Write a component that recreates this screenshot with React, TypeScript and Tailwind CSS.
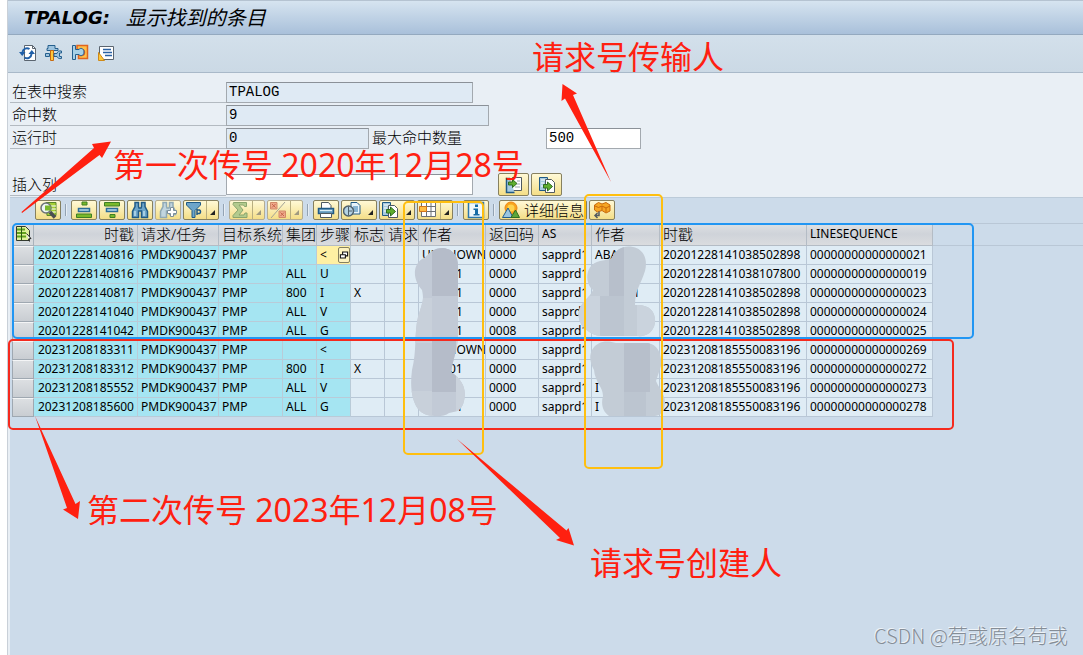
import type { ReactNode } from "react";

type IconName =
  | "refresh" | "tools" | "puzzle" | "note"
  | "detail" | "sortAsc" | "sortDesc" | "find" | "findNext" | "filter"
  | "sum" | "percent" | "print" | "views" | "export" | "layout" | "info"
  | "insert" | "append" | "picture" | "brick" | "selectAll" | "copy";

const icons: Record<IconName, ReactNode> = {
  refresh: (
    <>
      <path d="M5.5 1.5h8l3 3v12h-11z" fill="#fff" stroke="#5b6570" />
      <path d="M13.5 1.5v3h3" fill="none" stroke="#5b6570" />
      <path d="M3.500 8a4.500 4.500 0 0 1 7-3M12.500 10a4.500 4.500 0 0 1-7 3.500" fill="none" stroke="#1f5fa8" strokeWidth="2" />
      <path d="M0 8h6.500L3.200 12zM9.500 10h6.500l-3.200-4z" fill="#1f5fa8" />
    </>
  ),
  tools: (
    <>
      <path d="M3 1.500h7v3h3v2H2v-2h1z" fill="#9dc3de" stroke="#255f8d" />
      <path d="M5.500 6.500h3v10h-3z" fill="#ffc83a" stroke="#c76a12" />
      <path d="M.5 9.500h4v3h-4zM9 9.500h3c.5-2 2-3 4.500-2.500v2h-2v3.500h2v2c-2.500.5-4-.5-4.500-2H9z" fill="#9dc3de" stroke="#255f8d" />
    </>
  ),
  puzzle: (
    <>
      <path d="M6 1.500h10.500v13H7.500v-3h3a3 3 0 0 0 0-6H6z" fill="#ffc04a" stroke="#e0641f" strokeWidth="1.500" />
      <path d="M1.500 1.500h3v4h3.500c1-2 5-1.500 5 2.500s-4 4.500-5 2.500H4.500v5h-3z" fill="#a8d0e6" stroke="#255f8d" />
    </>
  ),
  note: (
    <>
      <path d="M2.500 2.500h14v13h-14z" fill="#fff" stroke="#5b6570" />
      <path d="M6 5.500h8M6 8.500h9M8 11.500h7" stroke="#2b62a4" strokeWidth="1.500" />
      <path d="M1.500 8.500l6 8h-6z" fill="#ffc83a" stroke="#cf8a18" />
    </>
  ),
  detail: (
    <>
      <path d="M7 1.500h10v13H8z" fill="#a6cf36" stroke="#59852a" />
      <path d="M9 5h8M9 8h8M9 11h8" stroke="#fff" strokeWidth="1" />
      <circle cx="7" cy="7" r="5" fill="#eef6f4" stroke="#6b7378" strokeWidth="1.500" />
      <path d="M6 4.500h5.500v5H6z" fill="#79b82d" />
      <path d="M11 11l5 5.500" stroke="#4a4f53" strokeWidth="3.500" />
    </>
  ),
  sortAsc: (
    <>
      <path d="M7 1h5v3H7zM1.500 13h15v3.500h-15z" fill="#7ab929" stroke="#3e7f25" />
      <path d="M3.500 7.500h11v3h-11z" fill="#b9dced" stroke="#2b6c98" strokeWidth="1.500" />
    </>
  ),
  sortDesc: (
    <>
      <path d="M1.500 1.500h15v3.500h-15zM7 13.500h5v3h-5z" fill="#7ab929" stroke="#3e7f25" />
      <path d="M3.500 7.500h11v3h-11z" fill="#b9dced" stroke="#2b6c98" strokeWidth="1.500" />
    </>
  ),
  find: (
    <>
      <path d="M4 1.500h3.500v4L8 7h2l.5-1.500v-4H14v4l2.500 5v6h-6V10h-3v6.500h-6v-6l2.500-5z" fill="#6da5ca" stroke="#205a86" strokeWidth="1.500" />
      <path d="M4 10v5M13 10v5" stroke="#b9dced" strokeWidth="1.500" />
    </>
  ),
  findNext: (
    <>
      <path d="M4 1.500h3.500v4L8 7h2l.5-1.500v-4H14v4l2.500 5v3h-6V10h-3v6.500h-6v-6l2.500-5z" fill="#c1d5df" stroke="#8fa9b5" strokeWidth="1.500" />
      <path d="M11.500 6.500h3v3h3v3h-3v3h-3v-3h-3v-3h3z" fill="#fff" stroke="#7c8f9b" />
    </>
  ),
  filter: (
    <>
      <path d="M1.500 1.500h14v2.500L10 9.500v7H7v-7L1.500 4z" fill="#6da5ca" stroke="#205a86" />
      <path d="M12 8v6M12 9h2.500a2 2 0 0 1 0 3.500H12" fill="none" stroke="#205a86" strokeWidth="1.500" />
    </>
  ),
  sum: <path d="M2.500 1.500h13v4h-2l-1-1.500H8l4 5-4 5h5l1-2h2v4.500h-14v-2l5-5.500-5-5.500z" fill="#b3cb8e" stroke="#8aa56d" />,
  percent: (
    <>
      <path d="M1.500 1.500h6.500v6.500H1.500zM10 10h6.500v6.500H10z" fill="#f0a98a" stroke="#d28a68" />
      <path d="M3 3l3.500 3.500M6.500 3L3 6.500M11.500 11.500L15 15M15 11.500L11.500 15" stroke="#c5654b" />
      <path d="M16 1L2 17" stroke="#a3a397" />
    </>
  ),
  print: (
    <>
      <path d="M4.500 7V1.500h7l2.500 3V7" fill="#fff" stroke="#4f5960" />
      <path d="M1.500 7.500h15v5h-15z" fill="#76a8c9" stroke="#205a86" strokeWidth="1.500" />
      <path d="M3.500 12.500h11v4h-11z" fill="#fff" stroke="#4f5960" />
      <path d="M3 9.500h12" stroke="#d9edf6" />
    </>
  ),
  views: (
    <>
      <path d="M8 1.500h6l3 3V13H8z" fill="#e8f4fa" stroke="#205a86" />
      <path d="M10 6h5M10 8h5M10 10h5" stroke="#2b77ad" />
      <circle cx="5.500" cy="10" r="5" fill="#b4d3e5" stroke="#50616c" strokeWidth="1.500" />
      <path d="M5.500 5.500v9M5.500 10h3.500" stroke="#50616c" />
    </>
  ),
  export: (
    <>
      <path d="M1.500 1.500h8v13h-8z" fill="#a7cbe0" stroke="#205a86" />
      <path d="M3 4h5M3 7h3M3 10h3" stroke="#fff" />
      <path d="M7.500 4.500h6l3 3v9h-9z" fill="#fff" stroke="#4f5960" />
      <path d="M5.500 8.500h4V6l5 4.500-5 4.500v-3h-4z" fill="#5fae2e" stroke="#2f6d1f" />
    </>
  ),
  append: (
    <>
      <path d="M1.500 1.500h8v13h-8z" fill="#a7cbe0" stroke="#205a86" />
      <path d="M3 4h5M3 7h3M3 10h3" stroke="#fff" />
      <path d="M7.500 3.500h6l3 3v10h-9z" fill="#fff" stroke="#4f5960" />
      <path d="M5.500 8.500h4V6l5 4.500-5 4.500v-3h-4z" fill="#5fae2e" stroke="#2f6d1f" />
    </>
  ),
  insert: (
    <>
      <path d="M7.500 1.500h9v13h-9z" fill="#fff" stroke="#4f5960" />
      <path d="M12 5h3M12 8h3M10 11h5" stroke="#9aa6ae" />
      <path d="M5 2.500H1.500v14h8" fill="#a7cbe0" stroke="#205a86" strokeWidth="1.500" />
      <path d="M3.500 6h4V3.500l4.500 4-4.500 4V9h-4z" fill="#5fae2e" stroke="#2f6d1f" />
    </>
  ),
  layout: (
    <>
      <path d="M2.500 1.500h14v14h-14z" fill="#fff" stroke="#6c7175" />
      <path d="M2.500 5.500h14M2.500 10.500h14M7.500 1.500v14M12 1.500v14" stroke="#6c7175" />
      <path d="M.5 5.500h7v5h-7z" fill="#ffbd45" stroke="#d4761c" />
    </>
  ),
  info: (
    <>
      <path d="M1.500 1.500h15v15h-15z" fill="#eff8fc" stroke="#2b77ad" strokeWidth="1.500" />
      <path d="M8 3.500h3V6H8zM6.500 7.500H11V13h1.500v1.500h-6V13H8V9H6.500z" fill="#166ca6" />
    </>
  ),
  picture: (
    <>
      <circle cx="9" cy="7" r="6" fill="#f8a51c" stroke="#ef8615" />
      <circle cx="9" cy="7" r="3.500" fill="#ffd34d" />
      <path d="M.5 16.500L6 7l5 9.500z" fill="#9bc6e1" stroke="#245f8c" />
      <path d="M9 16.500L13.500 9l4 7.500z" fill="#5da63a" stroke="#2f6d1f" />
    </>
  ),
  brick: (
    <>
      <path d="M1.500 4l4-2.500L9 3l4-1.500L17 4v6l-4 2-4-2.500-4.500 1.500-3-2z" fill="#f6a624" stroke="#c8690c" />
      <path d="M2 5l3.500 1.500L9 5l4 2 4-2M9 5v4M13 7v4" fill="none" stroke="#c8690c" />
      <path d="M6 10.500v4H3m1.500-2.500L2 14.500l2.500 2.500" fill="none" stroke="#545b60" strokeWidth="1.500" />
    </>
  ),
  selectAll: (
    <>
      <path d="M2.500 1.500h9l4 4v10h-13z" fill="#dff29b" stroke="#333a2e" />
      <path d="M3 4.500h8M3 8h9M3 11.500h9" stroke="#62a31c" strokeWidth="2" />
      <path d="M7.500 2v13" stroke="#2c5d13" />
      <path d="M12.500 8.500l4.500 5-2.500.5 1 2.500" fill="#fff" stroke="#222" />
    </>
  ),
  copy: (
    <>
      <path d="M6.500 3.500h9v7h-9z" fill="#fff" stroke="#111" strokeWidth="2" />
      <path d="M2.500 8.500h9v6h-9z" fill="#fff" stroke="#111" strokeWidth="2" />
    </>
  ),
};

function Icon({ name, className = "size-[18px]" }: { name: IconName; className?: string }) {
  return (
    <svg viewBox="0 0 18 18" className={`shrink-0 ${className}`} aria-hidden="true">
      {icons[name]}
    </svg>
  );
}

function ToolButton({
  icon, label, menu = false, split = false, faded = false, children,
}: {
  icon: IconName; label: string; menu?: boolean; split?: boolean; faded?: boolean; children?: ReactNode;
}) {
  const width = children ? "w-[88px]" : menu ? "w-9" : "w-[26px]";
  return (
    <button
      type="button"
      aria-label={label}
      className={`flex h-5 shrink-0 items-center rounded-[2px] border bg-linear-to-b from-[#fff9d6] to-[#f4de86] ${width} ${
        faded ? "border-[#b5ad91]" : "border-[#86805f]"
      } ${menu ? "justify-start pl-px" : "justify-center"}`}
    >
      <Icon name={icon} />
      {children}
      {menu && (
        <span className={`ml-auto flex h-full w-3 items-end justify-center pb-1 ${split ? "border-l border-[#b8ae80]" : ""}`}>
          <svg viewBox="0 0 5 5" className="size-[5px]" aria-hidden="true">
            <path d="M5 0v5H0z" fill={faded ? "#a09a80" : "#222"} />
          </svg>
        </span>
      )}
    </button>
  );
}

function Divider() {
  return <span className="mx-0.5 h-3 w-0.5 shrink-0 border-l border-r border-l-[#93a3b3] border-r-[#e6edf4]" />;
}

const labelClass = "flex h-full w-[216px] shrink-0 items-center border-b border-[#b3bac1] pl-0.5";
const fieldClass = "h-[21px] shrink-0 border border-[#a3a9af] border-t-[#8b9198] px-0.5 font-['Liberation_Mono','Noto_Sans_CJK_SC',monospace] text-[14px] outline-none";

const columns = [
  { title: "时戳", width: "w-[104px]", right: true },
  { title: "请求/任务", width: "w-[81px]" },
  { title: "目标系统", width: "w-16" },
  { title: "集团", width: "w-[34px]" },
  { title: "步骤", width: "w-[34px]" },
  { title: "标志", width: "w-[34px]" },
  { title: "请求", width: "w-[34px]" },
  { title: "作者", width: "w-[67px]" },
  { title: "返回码", width: "w-[53px]" },
  { title: "AS", width: "w-[53px]" },
  { title: "作者", width: "w-[68px]" },
  { title: "时戳", width: "w-[147px]" },
  { title: "LINESEQUENCE", width: "w-[126px]" },
];

type Row = {
  time: string; client: string; step: string; flag: string;
  owner: ReactNode; code: string; user: ReactNode; stamp: string; seq: string;
};

const one = <span className="pl-[34px]">1</span>;

const rows: Row[] = [
  { time: "20201228140816", client: "", step: "<", flag: "", owner: "UNKNOWN", code: "0000", user: "ABA", stamp: "20201228141038502898", seq: "00000000000000021" },
  { time: "20201228140816", client: "ALL", step: "U", flag: "", owner: one, code: "0000", user: "", stamp: "20201228141038107800", seq: "00000000000000019" },
  { time: "20201228140817", client: "800", step: "I", flag: "X", owner: one, code: "0000", user: <span className="pl-[38px]">1</span>, stamp: "20201228141038502898", seq: "00000000000000023" },
  { time: "20201228141040", client: "ALL", step: "V", flag: "", owner: one, code: "0000", user: "", stamp: "20201228141038502898", seq: "00000000000000024" },
  { time: "20201228141042", client: "ALL", step: "G", flag: "", owner: one, code: "0008", user: "", stamp: "20201228141038502898", seq: "00000000000000025" },
  { time: "20231208183311", client: "", step: "<", flag: "", owner: "UNKNOWN", code: "0000", user: "", stamp: "20231208185550083196", seq: "00000000000000269" },
  { time: "20231208183312", client: "800", step: "I", flag: "X", owner: <span className="pl-[27px]">01</span>, code: "0000", user: "", stamp: "20231208185550083196", seq: "00000000000000272" },
  { time: "20231208185552", client: "ALL", step: "V", flag: "", owner: "", code: "0000", user: "I", stamp: "20231208185550083196", seq: "00000000000000273" },
  { time: "20231208185600", client: "ALL", step: "G", flag: "", owner: one, code: "0000", user: "I", stamp: "20231208185550083196", seq: "00000000000000278" },
];

const keyCell = "border-b border-r border-[#b9cbd8] bg-[#a5e5f2] px-[3px]";
const cell = "overflow-hidden border-b border-r border-[#b9c7d6] bg-[#dfecf5] px-[3px]";

function LogTable() {
  return (
    <div className="flex pl-0.5">
      <table className="w-[921px] shrink-0 table-fixed border-separate border-spacing-0 whitespace-nowrap text-[12px] leading-[18px] text-black">
        <colgroup>
          <col className="w-[22px]" />
          {columns.map((c, i) => <col key={i} className={c.width} />)}
        </colgroup>
        <thead>
          <tr className="h-[23px]">
            <th aria-label="全选" className="border-b border-r border-[#a9b2bb] bg-[#d6dade] p-0">
              <button type="button" aria-label="全选" className="flex w-full justify-center">
                <Icon name="selectAll" />
              </button>
            </th>
            {columns.map((c, i) => (
              <th
                key={i}
                scope="col"
                className={`border-b border-r border-[#b4bcc5] bg-linear-to-b from-[#dfe2e5] via-[#cfd3d9] to-[#dadcdf] px-[3px] py-0 ${
                  c.right ? "text-right" : "text-left"
                } ${/^[A-Z]+$/.test(c.title) ? "font-normal" : "text-[15px] font-light"}`}
              >
                {c.title}
              </th>
            ))}
          </tr>
        </thead>
        <tbody>
          {rows.map((r, i) => (
            <tr key={i} className="h-[19px]">
              <td className="border border-[#9fa8b1] border-t-[#f4f5f6] bg-linear-to-b from-[#dcdfe2] to-[#c9cdd2] p-0" />
              <td className={`${keyCell} text-right`}>{r.time}</td>
              <td className={keyCell}>PMDK900437</td>
              <td className={keyCell}>PMP</td>
              <td className={keyCell}>{r.client}</td>
              {i === 0 ? (
                <td className="border-b border-r border-[#b9cbd8] bg-[#fff0a3] py-0 pl-[3px] pr-0">
                  <div className="flex items-center justify-between">
                    {r.step}
                    <button type="button" aria-label="选择值" className="flex h-4 w-3 items-center justify-center rounded-[2px] border border-[#86805f] bg-[#fdf3c0]">
                      <Icon name="copy" className="size-[10px]" />
                    </button>
                  </div>
                </td>
              ) : (
                <td className={keyCell}>{r.step}</td>
              )}
              <td className={cell}>{r.flag}</td>
              <td className={cell} />
              <td className={cell}>{r.owner}</td>
              <td className={cell}>{r.code}</td>
              <td className={cell}>sapprd1</td>
              <td className={cell}>{r.user}</td>
              <td className={cell}>{r.stamp}</td>
              <td className={cell}>{r.seq}</td>
            </tr>
          ))}
        </tbody>
      </table>
      <div className="h-[23px] flex-1 border-y border-[#b9c7d6]" />
    </div>
  );
}

function Smudges() {
  return (
    <svg className="absolute left-0 top-0 h-[480px] w-[700px]" viewBox="0 0 700 480" aria-hidden="true">
      <defs>
        <clipPath id="left-smudge">
          <path d="M422 259C428 257 430 248 443 248C453 249 458 256 458 266V335C458 348 453 359 451 372C462 379 467 389 464 401C462 411 455 412 449 413C443 418 426 417 420 411C411 402 410 385 412 370C417 350 414 334 418 317C423 301 424 300 422 290C413 280 412 266 422 259Z" />
        </clipPath>
        <clipPath id="right-smudge">
          <path d="M611 259C616 250 622 245 633 247C644 249 648 260 645 271C641 284 635 290 635 305C650 304 656 312 655 323C653 333 646 337 637 336H603C594 336 590 333 583 327C577 319 577 310 583 303C586 299 591 295 593 290C584 283 585 264 600 261Z" />
          <path d="M592 350C597 341 607 340 616 343H648C658 345 662 354 661 366L656 381C659 389 668 397 664 408C662 415 658 416 653 416H609C602 411 601 403 603 396C603 387 595 382 594 370C590 363 589 356 592 350Z" />
        </clipPath>
      </defs>
      <g clipPath="url(#left-smudge)">
        <path d="M408 244h62v176h-62z" fill="#c2cad6" />
        <path d="M432 244h26v52h-26zM432 340h24v52h-24z" fill="#b5bcc9" />
        <path d="M456 340h14v80h-14z" fill="#cad2dc" />
        <path d="M408 298h24v45h-24zM408 391h24v29h-24z" fill="#c8d0da" />
      </g>
      <g clipPath="url(#right-smudge)">
        <path d="M575 240h95v180h-95z" fill="#c3ccd6" />
        <path d="M609 244h15v52h-15zM624 342h26v50h-26z" fill="#b7bfcb" />
        <path d="M600 296h24v44h-24zM624 392h22v26h-22z" fill="#bcc5d0" />
        <path d="M575 296h25v44h-25zM637 300h22v38h-22z" fill="#cad3dd" />
      </g>
    </svg>
  );
}

function Arrows() {
  return (
    <svg className="absolute left-0 top-0 h-[560px] w-[700px]" viewBox="0 0 700 560" fill="#ff2010" aria-hidden="true">
      <path d="M22 213L21.500 212L94 148L92 144L111 141.500L102 158L99.500 155Z" />
      <path d="M611 182L565 98.500L561.500 101L562.500 84L577 93.500L573 95Z" />
      <path d="M35 416L75.500 504L80 501L78 519L63 509.500L67 508Z" />
      <path d="M457 439L566.500 530.500L568.500 528L574 545.500L556 540L560 538Z" />
    </svg>
  );
}

const note = "absolute whitespace-nowrap text-[32px] leading-8 text-[#ff2010]";

function Annotations() {
  return (
    <div className="pointer-events-none absolute inset-0">
      <Smudges />
      <div className="absolute left-[12px] top-[223px] h-[116px] w-[962px] rounded-[5px] border-2 border-[#2196f3]" />
      <div className="absolute left-[8px] top-[339px] h-[91px] w-[946px] rounded-[5px] border-2 border-[#f52a1e]" />
      <div className="absolute left-[403px] top-[201px] h-[254px] w-[81px] rounded-[5px] border-2 border-[#ffbf0f]" />
      <div className="absolute left-[584px] top-[194px] h-[275px] w-[79px] rounded-[5px] border-2 border-[#ffbf0f]" />
      <Arrows />
      <p className={`${note} left-[532px] top-[41px]`}>请求号传输人</p>
      <p className={`${note} left-[113px] top-[149px]`}>第一次传号 2020年12月28号</p>
      <p className={`${note} left-[87px] top-[494px]`}>第二次传号 2023年12月08号</p>
      <p className={`${note} left-[590px] top-[547px]`}>请求号创建人</p>
      <p className="absolute bottom-[5px] right-[15px] whitespace-nowrap font-['Noto_Sans_CJK_SC',sans-serif] text-[20px] leading-7 font-light text-[#858d96] [text-shadow:-1px_-1px_0_#eef3f8]">
        CSDN @荀彧原名苟或
      </p>
    </div>
  );
}

export default function App() {
  return (
    <div className="relative min-h-screen overflow-hidden bg-white pl-[7px] font-['Noto_Sans','Noto_Sans_CJK_SC',sans-serif] text-black">
      <div className="flex min-h-screen flex-col border-l border-[#c9d0d8] bg-[#e9eff5]">
        <header className="flex h-[35px] shrink-0 items-center border-y border-b-[#94a9bf] border-t-[#b5c3d1] bg-linear-to-b from-[#d6e4f0] to-[#a9c0da] pl-4">
          <h1 className="flex items-center gap-4 font-bold italic">
            <span className="font-['DejaVu_Sans',sans-serif] text-[18px]">TPALOG:</span>
            <span className="text-[20px] font-normal">显示找到的条目</span>
          </h1>
        </header>

        <nav className="flex h-[38px] shrink-0 items-center gap-2 border-b border-[#a9b9c9] bg-linear-to-b from-[#d3e0eb] to-[#cbd9e5] pb-0.5 pl-[11px]">
          {([["refresh", "刷新"], ["tools", "设置"], ["puzzle", "组件"], ["note", "注释"]] as [IconName, string][]).map(([icon, label]) => (
            <button key={icon} type="button" aria-label={label}>
              <Icon name={icon} />
            </button>
          ))}
        </nav>

        <form className="flex shrink-0 flex-col pl-0.5 pt-[7px] text-[15px] font-light" onSubmit={(e) => e.preventDefault()}>
          <div className="flex h-[23px] items-end">
            <label htmlFor="table" className={labelClass}>在表中搜索</label>
            <input id="table" readOnly defaultValue="TPALOG" className={`${fieldClass} w-[247px] bg-[#dfeaf4]`} />
          </div>
          <div className="flex h-[23px] items-end">
            <label htmlFor="hits" className={labelClass}>命中数</label>
            <input id="hits" readOnly defaultValue="9" className={`${fieldClass} w-[263px] bg-[#dfeaf4]`} />
          </div>
          <div className="flex h-[23px] items-end">
            <label htmlFor="runtime" className={labelClass}>运行时</label>
            <input id="runtime" readOnly defaultValue="0" className={`${fieldClass} w-[143px] bg-[#dfeaf4]`} />
            <label htmlFor="max" className="flex h-full w-[177px] shrink-0 items-center pl-[3px]">最大命中数量</label>
            <input id="max" defaultValue="500" className={`${fieldClass} w-[95px] bg-white`} />
          </div>
          <div className="mt-6 flex h-6 items-center pb-px">
            <label htmlFor="column" className={labelClass}>插入列</label>
            <input id="column" className={`${fieldClass} w-[247px] bg-white`} />
            <div className="ml-[25px] flex gap-0.5">
              {([["insert", "插入"], ["append", "追加"]] as [IconName, string][]).map(([icon, label]) => (
                <button key={icon} type="button" aria-label={label} className="flex h-[23px] w-[31px] items-center justify-center rounded-[2px] border border-[#86805f] bg-linear-to-b from-[#fff9d6] to-[#f4de86]">
                  <Icon name={icon} />
                </button>
              ))}
            </div>
          </div>
        </form>

        <main className="ml-0.5 flex-1 border-t border-[#bccbd9] bg-[#ccdbea]">
          <div className="flex h-[25px] items-center gap-0.5 pb-0.5 pl-[25px]" role="toolbar" aria-label="列表工具">
            <ToolButton icon="detail" label="明细" />
            <Divider />
            <ToolButton icon="sortAsc" label="升序" />
            <ToolButton icon="sortDesc" label="降序" />
            <ToolButton icon="find" label="查找" />
            <ToolButton icon="findNext" label="查找下一个" faded />
            <ToolButton icon="filter" label="过滤" menu split />
            <Divider />
            <ToolButton icon="sum" label="合计" menu split faded />
            <ToolButton icon="percent" label="小计" menu split faded />
            <Divider />
            <ToolButton icon="print" label="打印" />
            <ToolButton icon="views" label="视图" menu />
            <ToolButton icon="export" label="导出" menu />
            <ToolButton icon="layout" label="布局" menu split />
            <Divider />
            <ToolButton icon="info" label="信息" />
            <Divider />
            <ToolButton icon="picture" label="详细信息">
              <span className="whitespace-nowrap pl-1 text-[15px] leading-4 font-light">详细信息</span>
            </ToolButton>
            <ToolButton icon="brick" label="组件" />
          </div>
          <LogTable />
        </main>
      </div>
      <Annotations />
    </div>
  );
}
